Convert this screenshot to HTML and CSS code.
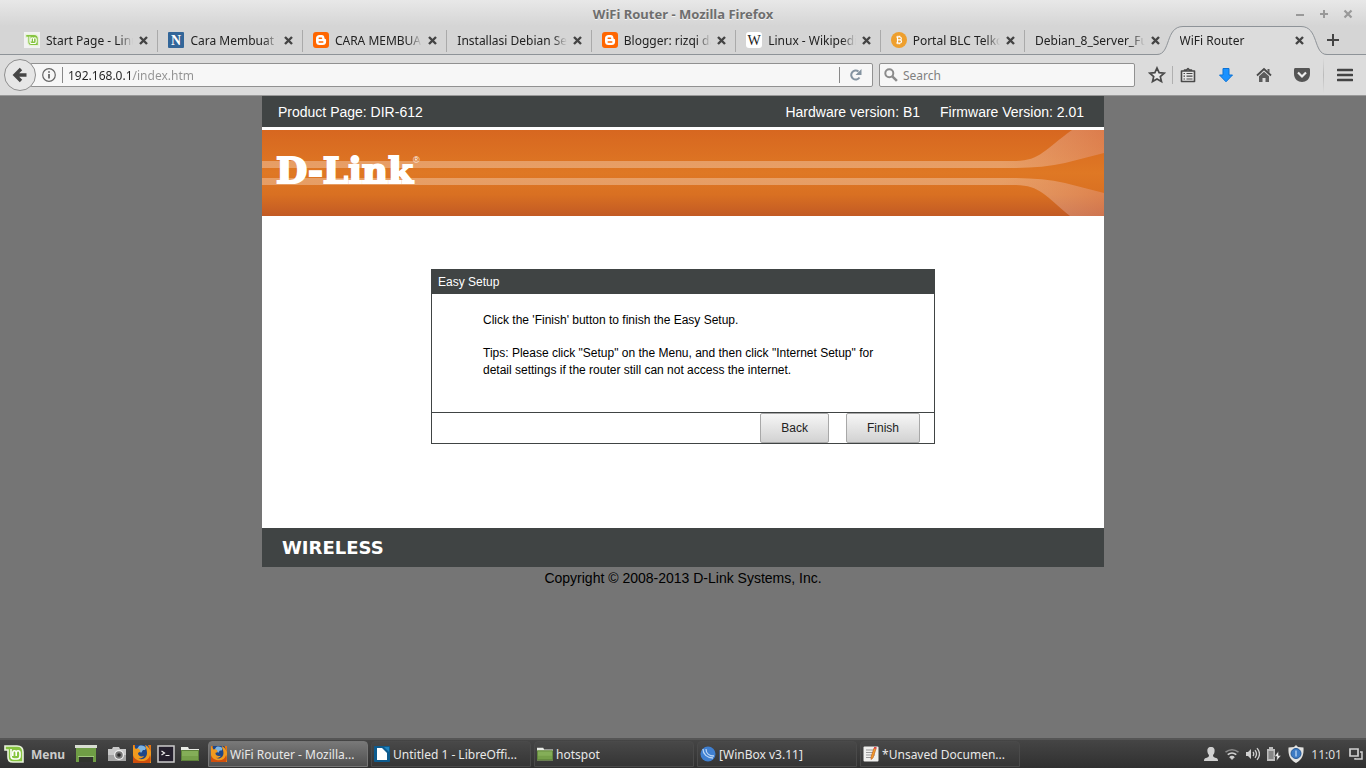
FILE: index.html
```
<!DOCTYPE html>
<html lang="en">
<head>
    <meta charset="UTF-8">
    <meta name="viewport" content="width=device-width, initial-scale=1.0">
    <title>WiFi Router</title>
    <link rel="stylesheet" href="styles.css">
</head>
<body>
    <!-- shared icons -->
    <svg class="defs" width="0" height="0" aria-hidden="true">
        <symbol id="close" viewBox="0 0 9 9">
            <path d="M1 1l7 7M8 1l-7 7" fill="none" stroke="currentColor" stroke-width="2.4"/>
        </symbol>
        <symbol id="blogger" viewBox="0 0 16 16">
            <rect width="16" height="16" rx="3" fill="#ff6600"/>
            <path d="M6.5 3h2.3c1.6 0 2.6 1.2 2.6 2.8 0 .8.3 1.1.9 1.1.5 0 .8.3.8.8v2.1c0 2-1.3 3.3-3.3 3.3H6.4C4.4 13.1 3 11.8 3 9.8V6.4C3 4.3 4.4 3 6.5 3z" fill="#fff"/>
            <path d="M6.2 6.2h2.3M6.2 9.9h3.6" stroke="#ff6600" stroke-width="1.5" stroke-linecap="round"/>
        </symbol>
        <symbol id="mint" viewBox="0 0 20 20">
            <path d="M1 2h12c4 0 6 2 6 6v10H9c-4 0-5-2-5-5V6H1z" fill="#86c440" stroke="#e9f3dc" stroke-width="1.6"/>
            <path d="M7 5v7c0 2 1 3 3 3h3c2 0 3-1 3-3V9c0-1.5-.8-2.2-2-2.2S12.2 7.5 12.2 9v3M12.2 9c0-1.5-.8-2.200-1.8-2.2S8.800 7.500 8.800 9v3" fill="none" stroke="#fff" stroke-width="1.600"/>
        </symbol>
        <symbol id="firefox" viewBox="0 0 18 18">
            <path d="M0 0h18v18H0z" fill="#e87511"/>
            <path d="M2 0h13l2 5-3 9-7 1-4-5-1-5z" fill="#1f4788"/>
            <path d="M6 1c3-1 6 0 7 2l-1 2-2 0-2 3-2-3-2-1z" fill="#7db4e2"/>
            <path d="M0 0c1 2 2 3 3 4 2-1 3 0 4 1 1 2-1 2-2 3 0 3 3 4 6 3-1 2-4 3-6 2 4 3 9 0 9-5 0-3-1-5-2-8 3 1 5 4 6 7v11H0z" fill="#f09a1e"/>
            <path d="M0 10c1 4 5 6 9 6s7-2 8-6c1 3 1 5 0 8H0z" fill="#cf4f0d"/>
        </symbol>
        <symbol id="folder" viewBox="0 0 18 18">
            <path d="M0 2h7l1 2h10v12H0z" fill="#e9ece6"/>
            <path d="M0 5h18v11H0z" fill="#84ae58"/>
            <path d="M0 11h18v5H0z" fill="#76a04a"/>
            <path d="M.5 5.500h17v10H.5z" fill="none" stroke="#5d813a"/>
        </symbol>
    </svg>

    <header class="browser">
        <div class="titlebar">
            <span class="window-title">WiFi Router - Mozilla Firefox</span>
            <div class="window-controls">
                <button aria-label="Minimize"><svg width="10" height="10" viewBox="0 0 10 10"><path d="M1 6h8" stroke="#999" stroke-width="2"/></svg></button>
                <button aria-label="Maximize"><svg width="10" height="10" viewBox="0 0 10 10"><path d="M1 5h8M5 1v8" stroke="#999" stroke-width="2"/></svg></button>
                <button aria-label="Close"><svg width="10" height="10" viewBox="0 0 10 10"><path d="M1.500 1.500l7 7M8.500 1.500l-7 7" stroke="#999" stroke-width="2.200"/></svg></button>
            </div>
        </div>

        <div class="tabstrip">
            <div class="tabs">
                <div class="tab">
                    <svg class="favicon" viewBox="0 0 16 16"><rect width="16" height="16" fill="#f2f2f2"/><use href="#mint" x="1" y="1" width="14" height="14"/></svg>
                    <span class="tab-label">Start Page - Linu</span>
                    <button class="tab-close" aria-label="Close tab"><svg><use href="#close"/></svg></button>
                </div>
                <div class="tab">
                    <svg class="favicon" viewBox="0 0 16 16"><rect width="16" height="16" rx="1" fill="#336699"/><text class="favicon-letter" x="8" y="13" fill="#fff">N</text></svg>
                    <span class="tab-label">Cara Membuat T</span>
                    <button class="tab-close" aria-label="Close tab"><svg><use href="#close"/></svg></button>
                </div>
                <div class="tab">
                    <svg class="favicon"><use href="#blogger"/></svg>
                    <span class="tab-label">CARA MEMBUA</span>
                    <button class="tab-close" aria-label="Close tab"><svg><use href="#close"/></svg></button>
                </div>
                <div class="tab">
                    <span class="tab-label">Installasi Debian Se</span>
                    <button class="tab-close" aria-label="Close tab"><svg><use href="#close"/></svg></button>
                </div>
                <div class="tab">
                    <svg class="favicon"><use href="#blogger"/></svg>
                    <span class="tab-label">Blogger: rizqi da</span>
                    <button class="tab-close" aria-label="Close tab"><svg><use href="#close"/></svg></button>
                </div>
                <div class="tab">
                    <svg class="favicon" viewBox="0 0 16 16"><rect width="16" height="16" rx="3" fill="#fff"/><text class="favicon-letter wiki" x="8" y="13" fill="#222">W</text></svg>
                    <span class="tab-label">Linux - Wikipedia</span>
                    <button class="tab-close" aria-label="Close tab"><svg><use href="#close"/></svg></button>
                </div>
                <div class="tab">
                    <svg class="favicon" viewBox="0 0 16 16"><circle cx="8" cy="8" r="8" fill="#ee9f2d"/><path d="M6.500 5v6M5.200 5h3.600c2 0 2 2.900 0 2.900H6.500M8.800 7.900c2.300 0 2.300 3.100 0 3.100H5.200M7 3.700V5M8.700 3.700V5M7 11v1.300M8.700 11v1.300" fill="none" stroke="#fff" stroke-width="1.200"/></svg>
                    <span class="tab-label">Portal BLC Telko</span>
                    <button class="tab-close" aria-label="Close tab"><svg><use href="#close"/></svg></button>
                </div>
                <div class="tab">
                    <span class="tab-label">Debian_8_Server_Fu</span>
                    <button class="tab-close" aria-label="Close tab"><svg><use href="#close"/></svg></button>
                </div>
                <div class="tab active">
                    <svg class="tab-edge left" viewBox="0 0 26 29"><path d="M0 28.500C14 28.500 8 .5 26 .5V29H0z" fill="#dcdcdc"/><path d="M0 28.500C14 28.500 8 .5 26 .5" fill="none" stroke="#8e9398"/></svg>
                    <svg class="tab-edge right" viewBox="0 0 26 29"><path d="M26 28.500C12 28.500 18 .5 0 .5V29h26z" fill="#dcdcdc"/><path d="M26 28.500C12 28.500 18 .5 0 .5" fill="none" stroke="#8e9398"/></svg>
                    <span class="tab-label">WiFi Router</span>
                    <button class="tab-close" aria-label="Close tab"><svg><use href="#close"/></svg></button>
                </div>
            </div>
            <button class="new-tab" aria-label="New tab"><svg width="12" height="12" viewBox="0 0 12 12"><path d="M0 6h12M6 0v12" stroke="#444" stroke-width="2"/></svg></button>
        </div>

        <div class="navbar">
            <button class="back" aria-label="Go back">
                <svg width="16" height="16" viewBox="0 0 16 16"><path d="M14.500 8H3M9 2L3 8l6 6" fill="none" stroke="#454545" stroke-width="3.400"/></svg>
            </button>
            <div class="urlbar">
                <svg width="14" height="14" viewBox="0 0 14 14"><circle cx="7" cy="7" r="6.300" fill="none" stroke="#666" stroke-width="1.200"/><path d="M7 6v4.500M7 3.200v1.600" stroke="#555" stroke-width="1.600"/></svg>
                <input type="text" class="url" aria-label="Address" value="192.168.0.1/index.htm">
                <button class="reload" aria-label="Reload"><svg width="12" height="12" viewBox="0 0 12 12"><path d="M9.500 8.500A4.500 4.500 0 1 1 8.500 2.500" fill="none" stroke="#8493a0" stroke-width="2"/><path d="M11.500 0v6h-6z" fill="#8493a0"/></svg></button>
            </div>
            <div class="searchbar">
                <svg width="14" height="14" viewBox="0 0 14 14"><circle cx="5.300" cy="5.300" r="4" fill="none" stroke="#8c8c8c" stroke-width="2"/><path d="M8.300 8.300l4.600 4.600" stroke="#8c8c8c" stroke-width="2.500"/></svg>
                <input type="text" aria-label="Search" placeholder="Search">
            </div>
            <div class="toolbar">
                <button aria-label="Bookmark this page"><svg width="18" height="18" viewBox="0 0 18 18"><path d="M9 2l2.100 4.700 5.100.5-3.900 3.400 1.200 5L9 13l-4.500 2.600 1.200-5L1.800 7.200l5.100-.5z" fill="#e8e8e8" stroke="#4a4a4a" stroke-width="1.700"/></svg></button>
                <span class="divider"></span>
                <button aria-label="Bookmarks"><svg width="16" height="16" viewBox="0 0 16 16"><path d="M1.500 4h13v10.500h-13zM4.500 4V3h2L8 1.500 9.500 3h2v1z" fill="#e8e8e8" stroke="#4a4a4a" stroke-width="1.600" stroke-linejoin="round"/><path d="M3.500 6.500H5M6.500 6.500h6M3.500 9.200H5M6.500 9.200h6M3.500 12H5M6.500 12h6" stroke="#4a4a4a" stroke-width="1.200"/></svg></button>
                <button aria-label="Downloads"><svg width="16" height="16" viewBox="0 0 16 16"><path d="M5 1.500h6V8h3.500L8 14.800 1.500 8H5z" fill="#1a92ff" stroke="#0b72d6"/></svg></button>
                <button aria-label="Home"><svg width="16" height="16" viewBox="0 0 16 16"><path d="M1 8.500L8 2l7 6.500" fill="none" stroke="#4a4a4a" stroke-width="1.800"/><path d="M11.500 2H13.500V6l-2-2zM3 9.200L8 4.800l5 4.400V15H9.500v-4h-3v4H3z" fill="#5c5c5c"/></svg></button>
                <button aria-label="Pocket"><svg width="18" height="16" viewBox="0 0 18 16"><path d="M2.500 1h13c1 0 1.500.6 1.500 1.500V7c0 5-4 8-8 8S1 12 1 7V2.500C1 1.600 1.500 1 2.500 1z" fill="#555"/><path d="M5 5.500l4 4 4-4" fill="none" stroke="#eee" stroke-width="2.200"/></svg></button>
                <span class="divider tall"></span>
                <button aria-label="Open menu"><svg width="16" height="14" viewBox="0 0 16 14"><path d="M1 2h14M1 7h14M1 12h14" stroke="#444" stroke-width="2.600" stroke-linecap="round"/></svg></button>
            </div>
        </div>
    </header>

    <main class="page">
        <div class="router">
            <div class="versions">
                <span>Product Page: DIR-612</span>
                <span class="hardware">Hardware version: B1</span>
                <span>Firmware Version: 2.01</span>
            </div>
            <div class="banner">
                <svg class="banner-lines" viewBox="0 0 842 86" preserveAspectRatio="xMaxYMid slice" aria-hidden="true">
                    <defs>
                        <linearGradient id="flare" gradientUnits="userSpaceOnUse" x1="740" y1="0" x2="842" y2="0">
                            <stop offset="0" stop-color="#fff" stop-opacity=".3"/>
                            <stop offset="1" stop-color="#e5a5a0" stop-opacity=".35"/>
                        </linearGradient>
                    </defs>
                    <path d="M0 31H752C778 31 782 20 810 0H842V23L803 33Q780 38 752 38H0z" fill="url(#flare)"/>
                    <path d="M0 48H752Q780 48 803 53L842 63V86H808C782 65 778 55 752 55H0z" fill="url(#flare)"/>
                </svg>
                <a class="logo" href="#">D-Link<sup>®</sup></a>
            </div>

            <div class="content">
                <section class="setup">
                    <h1>Easy Setup</h1>
                    <div class="setup-text">
                        <p>Click the 'Finish' button to finish the Easy Setup.</p>
                        <p>Tips: Please click "Setup" on the Menu, and then click "Internet Setup" for detail settings if the router still can not access the internet.</p>
                    </div>
                    <div class="setup-buttons">
                        <button>Back</button>
                        <button>Finish</button>
                    </div>
                </section>
            </div>

            <div class="wireless">WIRELESS</div>
        </div>
        <p class="copyright">Copyright © 2008-2013 D-Link Systems, Inc.</p>
    </main>

    <footer class="taskbar">
        <button class="menu"><svg width="20" height="20"><use href="#mint"/></svg>Menu</button>
        <div class="launchers">
            <button class="show-desktop" aria-label="Show desktop"><svg width="22" height="18" viewBox="0 0 22 18"><path d="M0 0h22v3H0z" fill="#d8ddd2"/><path d="M1 3h20v14H1z" fill="#6f9d45"/><path d="M4 12h14v5H4z" fill="#30332d"/><path d="M3 11.500h16" stroke="#a2c880"/></svg></button>
            <button aria-label="Screenshot"><svg width="20" height="16" viewBox="0 0 20 16"><path d="M1 3h4l1-2h6l1 2h6v12H1z" fill="#c9c9c9"/><path d="M1 9h18v6H1z" fill="#a6a6a6"/><circle cx="12" cy="9" r="5" fill="#eee"/><circle cx="12" cy="9" r="3.800" fill="#777"/><circle cx="12" cy="9" r="1.800" fill="#292929"/></svg></button>
            <button aria-label="Firefox"><svg width="18" height="18"><use href="#firefox"/></svg></button>
            <button aria-label="Terminal"><svg width="18" height="18" viewBox="0 0 18 18"><path d="M1 1h16v16H1z" fill="#241f2d" stroke="#ccc" stroke-width="1.500"/><path d="M4.500 6l3 2-3 2M8.500 10.500h4" fill="none" stroke="#eee" stroke-width="1.200"/></svg></button>
            <button aria-label="Files"><svg width="18" height="18"><use href="#folder"/></svg></button>
        </div>
        <div class="tasks">
            <button class="task current"><svg width="16" height="16"><use href="#firefox"/></svg><span>WiFi Router - Mozilla...</span></button>
            <button class="task"><svg width="16" height="16" viewBox="0 0 16 16"><rect width="16" height="16" rx="1" fill="#0d5b8e"/><path d="M3 2h5l5 5v7H3z" fill="#fff"/><path d="M10 1h5v5z" fill="#1f83bd"/></svg><span>Untitled 1 - LibreOffi...</span></button>
            <button class="task"><svg width="16" height="16"><use href="#folder"/></svg><span>hotspot</span></button>
            <button class="task"><svg width="16" height="16" viewBox="0 0 16 16"><circle cx="8" cy="8" r="7.500" fill="#3f7fd0"/><path d="M3 3c0 5 4 9 10 9M6 3c0 4 3 7 8 7" fill="none" stroke="#b9d4f4" stroke-width="1.300"/></svg><span>[WinBox v3.11]</span></button>
            <button class="task"><svg width="16" height="16" viewBox="0 0 16 16"><rect x=".5" y=".5" width="15" height="15" rx="1" fill="#f0f0ee"/><path d="M3 4h9M3 6.500h9M3 9h9M3 11.500h7" stroke="#999"/><path d="M11 2l2 1-3 9-2 1.500V11z" fill="#f19b2a" stroke="#bd5a22" stroke-width=".6"/><path d="M11 1h2.500v2L11 2.500z" fill="#df4545"/></svg><span>*Unsaved Documen...</span></button>
        </div>
        <div class="tray">
            <svg width="14" height="14" viewBox="0 0 14 14"><path d="M7 0c3 0 4 2 3.500 5-.2 1.500-1 2.500-1.500 3 0 2 1 2.500 3 3 1.500.4 2 1 2 3H0c0-2 .5-2.600 2-3 2-.5 3-1 3-3-.5-.5-1.300-1.500-1.500-3C3 2 4 0 7 0z" fill="#d0d0d0"/></svg>
            <svg width="14" height="14" viewBox="0 0 14 14"><path d="M.5 5.200q6.500-5 13 0" fill="none" stroke="#8a8a8a" stroke-width="1.600"/><path d="M2.700 7.700q4.300-3.400 8.600 0" fill="none" stroke="#d0d0d0" stroke-width="1.600"/><path d="M4.700 10q2.300-1.800 4.600 0L7 12.400z" fill="#d0d0d0" stroke="#d0d0d0"/></svg>
            <svg width="14" height="14" viewBox="0 0 14 14"><path d="M0 5h2l3-3v10L2 9H0z" fill="#d0d0d0"/><path d="M7 5q1.500 2 0 4M9 3.200q3 3.800 0 7.600M11 1.200q5 5.800 0 11.600" fill="none" stroke="#d0d0d0" stroke-width="1.300"/></svg>
            <svg width="14" height="14" viewBox="0 0 14 14"><path d="M0 2h2V0h4v2h2v12H0z" fill="#bdbdbd"/><path d="M1.500 4h5v8h-5z" fill="#868686"/><path d="M11.500 4L7.500 9.500h2.500L9.500 14 14 8.500h-2.500z" fill="#eee" stroke="#3c3c3c" stroke-width=".5"/></svg>
            <svg width="16" height="18" viewBox="0 0 16 18"><path d="M8 0l2 2 5.500.5C16 10 14 15 8 18 2 15 0 10 .5 2.500L6 2z" fill="#e2e2e0"/><circle cx="8" cy="8.500" r="5" fill="#3d7bc4" stroke="#275995"/><path d="M8 5.500v6" stroke="#a9c8ec" stroke-width="1.500"/></svg>
            <time>11:01</time>
            <svg width="14" height="12" viewBox="0 0 14 12"><path d="M1 1h8v7H1z" fill="none" stroke="#d0d0d0" stroke-width="1.700"/><path d="M11 4h2v7H6v-1" fill="none" stroke="#d0d0d0" stroke-width="1.500"/></svg>
        </div>
    </footer>
</body>
</html>
```
FILE: styles.css
```
* {
    box-sizing: border-box;
}
body {
    display: flex;
    flex-direction: column;
    min-height: 100vh;
    margin: 0;
    font-family: 'Noto Sans', sans-serif;
    font-size: 12px;
    color: #222;
    background-color: #757575;
}
button {
    padding: 0;
    border: none;
    background: none;
    font: inherit;
    color: inherit;
    cursor: pointer;
}
svg {
    display: block;
    flex: none;
}
.defs {
    position: absolute;
}

/* Browser window */
.browser {
    background: linear-gradient(#e8e8e8, #d5d5d5 26px);
}
.titlebar {
    position: relative;
    display: flex;
    align-items: center;
    justify-content: center;
    height: 26px;
    padding-top: 2px;
}
.window-title {
    font-size: 13px;
    font-weight: bold;
    color: #6e6e6e;
    text-shadow: 0 1px 0 #f4f4f4;
}
.window-controls {
    position: absolute;
    right: 13px;
    display: flex;
    gap: 14px;
}
.tabstrip {
    display: flex;
    height: 29px;
    padding-left: 14px;
    border-bottom: 1px solid #8e9398;
}
.tabs {
    display: flex;
    flex: 1;
    min-width: 0;
}
.tab {
    position: relative;
    display: flex;
    align-items: center;
    gap: 6px;
    flex: 1 1 0;
    min-width: 0;
    padding: 0 10px;
}
.tab::after {
    content: "";
    position: absolute;
    right: 0;
    top: 4px;
    bottom: 2px;
    width: 1px;
    background-color: #aaa;
}
.tab:nth-last-child(-n+2)::after {
    display: none;
}
.favicon {
    width: 16px;
    height: 16px;
}
.favicon-letter {
    font-family: 'Liberation Serif', serif;
    font-size: 14px;
    font-weight: bold;
    text-anchor: middle;
}
.favicon-letter.wiki {
    font-weight: normal;
}
.tab-label {
    flex: 1;
    overflow: hidden;
    white-space: nowrap;
    -webkit-mask-image: linear-gradient(to left, transparent, #000 14px);
    mask-image: linear-gradient(to left, transparent, #000 14px);
}
.tab-close {
    position: relative;
    color: #444;
}
.tab-close svg {
    width: 9px;
    height: 9px;
}
.tab.active {
    height: 29px;
    padding-bottom: 1px;
    background: linear-gradient(#8e9398 1px, #dcdcdc 1px) 50% 0 / calc(100% - 26px) 100% no-repeat;
}
.tab-edge {
    position: absolute;
    top: 0;
    width: 26px;
    height: 29px;
}
.tab-edge.left {
    left: -13px;
}
.tab-edge.right {
    right: -13px;
}
.tab.active .tab-label {
    position: relative;
}
.new-tab {
    display: flex;
    align-items: center;
    justify-content: center;
    width: 52px;
    padding-right: 14px;
}
.navbar {
    display: flex;
    align-items: center;
    height: 41px;
    padding: 0 6px 0 4px;
    border-bottom: 1px solid #999;
    background-color: #dcdcdc;
}
.back {
    position: relative;
    display: flex;
    align-items: center;
    justify-content: center;
    flex: none;
    width: 32px;
    height: 32px;
    border: 1px solid #8e8e8e;
    border-radius: 50%;
    background-color: #e6e6e6;
}
.urlbar, .searchbar {
    display: flex;
    align-items: center;
    height: 24px;
    border: 1px solid #919191;
    border-radius: 2px;
    background-color: #f7f7f7;
}
.urlbar {
    flex: 1;
    min-width: 0;
    margin-left: -6px;
    padding-left: 11px;
}
.searchbar {
    flex: 0 1 256px;
    min-width: 0;
    gap: 5px;
    margin-left: 6px;
    padding-left: 4px;
}
input {
    flex: 1;
    min-width: 0;
    padding: 0;
    border: none;
    outline: none;
    background: none;
    font: inherit;
    color: #222;
}
input::placeholder {
    color: #808080;
    opacity: 1;
}
/* host part dark, path part grey */
.url {
    height: 16px;
    margin-left: 6px;
    padding-left: 5px;
    border-left: 1px solid #888;
    color: transparent;
    background: linear-gradient(to right, #222 70px, #929292 70px);
    -webkit-background-clip: text;
    background-clip: text;
}
.reload {
    display: flex;
    align-items: center;
    justify-content: center;
    width: 33px;
    height: 16px;
    border-left: 1px solid #888;
}
.toolbar {
    display: flex;
    align-items: center;
    gap: 8px;
    margin-left: 7px;
}
.toolbar button {
    display: flex;
    align-items: center;
    justify-content: center;
    width: 30px;
    height: 30px;
}
.divider {
    width: 1px;
    height: 18px;
    margin: 0 -8px;
    background-color: #b0b0b0;
}
.divider.tall {
    height: 36px;
    margin: 0 -2px;
    background: linear-gradient(#dcdcdc, #bbb, #dcdcdc);
}

/* Router page */
.page {
    flex: 1;
    padding: 0 8px;
    font-family: 'Liberation Sans', sans-serif;
    color: #000;
}
.router {
    max-width: 842px;
    margin: 0 auto;
    background-color: #fff;
}
.versions {
    display: flex;
    align-items: center;
    gap: 20px;
    height: 31px;
    padding: 0 20px 0 16px;
    font-size: 14px;
    color: #fff;
    background-color: #404444;
}
.hardware {
    margin-left: auto;
}
.banner {
    position: relative;
    display: flex;
    align-items: center;
    height: 86px;
    margin-top: 3px;
    padding: 0 14px 6px;
    background: linear-gradient(#d76720, #df7824 50%, #d97022 75%, #c25a24);
}
.banner-lines {
    position: absolute;
    inset: 0;
    width: 100%;
    height: 100%;
}
.logo {
    position: relative;
    font-family: 'DejaVu Serif', serif;
    font-size: 36px;
    font-weight: bold;
    line-height: 40px;
    color: #fff;
    text-decoration: none;
    -webkit-text-stroke: 2px #fff;
}
.logo sup {
    position: absolute;
    top: 6px;
    left: 100%;
    font-family: 'Liberation Sans', sans-serif;
    font-size: 9px;
    font-weight: normal;
    line-height: 9px;
    -webkit-text-stroke: 0;
}
.content {
    padding: 53px 20px 84px;
}
.setup {
    max-width: 504px;
    margin: 0 auto;
    border: 1px solid #404444;
}
.setup h1 {
    margin: 0;
    padding-left: 6px;
    font-size: 12px;
    font-weight: normal;
    line-height: 24px;
    color: #fff;
    background-color: #404444;
}
.setup-text {
    padding: 18px 51px 33px;
    line-height: 17px;
}
.setup-text p {
    margin: 0 0 16px;
}
.setup-text p:last-child {
    margin-bottom: 0;
}
.setup-buttons {
    display: flex;
    justify-content: flex-end;
    gap: 17px;
    padding-right: 14px;
    border-top: 1px solid #404444;
}
.setup-buttons button {
    height: 30px;
    padding: 0 20px;
    border: 1px solid #a8a8a8;
    border-radius: 2px;
    color: #222;
    background: linear-gradient(#f6f6f6, #d2d2d2);
}
.wireless {
    height: 39px;
    padding-left: 20px;
    font-family: 'DejaVu Sans', sans-serif;
    font-size: 18px;
    font-weight: bold;
    line-height: 40px;
    color: #fff;
    background-color: #404444;
}
.copyright {
    margin: 3px 0;
    font-size: 14px;
    line-height: 16px;
    text-align: center;
}

/* Desktop panel */
.taskbar {
    display: flex;
    align-items: center;
    height: 30px;
    padding: 0 3px 0 4px;
    border-top: 2px solid #555;
    color: #e8e8e8;
    background: linear-gradient(#454545, #303030);
}
.menu {
    display: flex;
    align-items: center;
    gap: 7px;
    font-weight: bold;
    color: #ccc;
}
.launchers {
    display: flex;
    align-items: center;
    gap: 6px;
    margin-left: 10px;
}
.show-desktop {
    margin-right: 4px;
}
.tasks {
    display: flex;
    flex: 1;
    gap: 3px;
    min-width: 0;
    margin-left: 9px;
}
.task {
    display: flex;
    align-items: center;
    gap: 3px;
    flex: 0 1 160px;
    min-width: 0;
    height: 26px;
    padding: 0 6px 0 2px;
    border: 1px solid #4a4a4a;
    border-radius: 4px 4px 0 0;
    background: linear-gradient(#484848, #353535);
}
.task.current {
    border-color: #777;
    background: linear-gradient(#787878, #505050);
}
.task span {
    overflow: hidden;
    text-overflow: ellipsis;
    white-space: nowrap;
}
.tray {
    display: flex;
    align-items: center;
    gap: 7px;
}
.tray time {
    color: #ddd;
}
```
